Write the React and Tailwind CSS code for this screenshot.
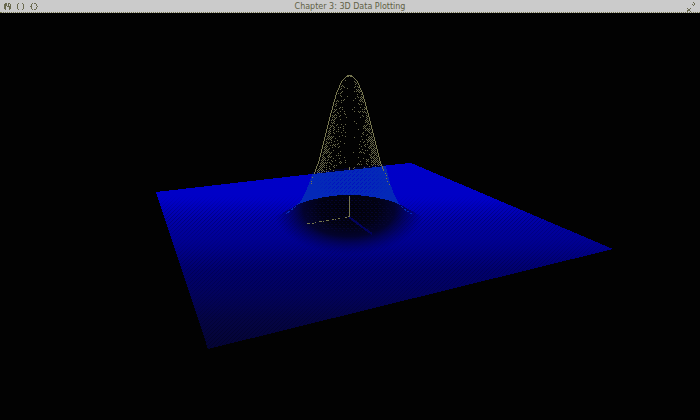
import React from "react";

// Half-width of the bell for each height, from its peak to the plane.
const profile = [
  [76, 1], [77, 4], [80, 7], [86, 10], [93, 13], [100, 15], [111, 18],
  [123, 21], [135, 24], [147, 27], [159, 30], [170, 34], [180, 38],
];

function halfWidth(y) {
  for (let i = 1; i < profile.length; i++) {
    const [y0, w0] = profile[i - 1];
    const [y1, w1] = profile[i];
    if (y <= y1) return w0 + ((w1 - w0) * (y - y0)) / (y1 - y0);
  }
  return 38;
}

function bellPoints() {
  let seed = 7;
  const random = () => {
    seed = (seed * 16807) % 2147483647;
    return seed / 2147483647;
  };
  let d = "";
  for (let y = 77; y < 174; y++) {
    const w = halfWidth(y);
    for (let x = -Math.floor(w) + 2; x < w - 1; x++) {
      if (y > 173 - (x + 37) / 9) continue;
      const edge = Math.abs(x) / w;
      const depth = (y - 76) / 98;
      const chance = 0.03 + 0.75 * Math.pow(edge, 4) + 0.16 * depth * edge;
      const r = random();
      if ((x + y) % 2 === 0 && edge > 0.12 && r < chance * 1.5) {
        d += `M${349 + x} ${y}h1v1h-1z`;
      }
    }
  }
  return d;
}

function bellOutline() {
  let d = "M347 75h5v1h-5z";
  for (let y = 76; y < 174; y++) {
    const w = Math.round(halfWidth(y));
    const next = Math.max(1, Math.round(halfWidth(y + 1)) - w);
    d += `M${349 - w - next + 1} ${y}h${next}v1h${-next}z`;
    if (y < 171) d += `M${349 + w} ${y}h${next}v1h${-next}z`;
  }
  for (const [x, y] of [[312, 177], [311, 181], [311, 183], [385, 173], [386, 175], [386, 178], [387, 181], [389, 184]]) {
    d += `M${x} ${y}h1v1h-1z`;
  }
  return d;
}

const points = bellPoints();
const outline = bellOutline();

const surface = "M156 192L399 164L411 163L613 249L208 349Z";
const skirt =
  "M312 174L386 166C388 178 392 192 399 204Q376 195 349 195Q322 195 299 204C305 194 309 185 312 174Z";
const crater = "M299 204Q322 195 349 195Q376 195 399 204L432 222L420 258H278L266 222Z";

function Plot() {
  return (
    <svg
      viewBox="0 13 700 407"
      className="block w-full"
      shapeRendering="crispEdges"
      role="img"
      aria-label="3D surface plot"
    >
      <defs>
        <linearGradient id="depth" gradientUnits="userSpaceOnUse" x1="0" y1="163" x2="0" y2="349">
          <stop offset="0" stopColor="#0000c8" />
          <stop offset="0.2" stopColor="#0000c6" />
          <stop offset="0.34" stopColor="#0000a0" />
          <stop offset="0.46" stopColor="#00008a" />
          <stop offset="0.58" stopColor="#00006c" />
          <stop offset="0.7" stopColor="#02025c" />
          <stop offset="0.84" stopColor="#040444" />
          <stop offset="1" stopColor="#040434" />
        </linearGradient>
        <radialGradient
          id="shade"
          gradientUnits="userSpaceOnUse"
          cx="0"
          cy="0"
          r="1"
          gradientTransform="translate(349 209) scale(76 46)"
        >
          <stop offset="0" stopColor="#010108" />
          <stop offset="0.38" stopColor="#020212" />
          <stop offset="0.6" stopColor="#030328" stopOpacity="0.95" />
          <stop offset="0.8" stopColor="#030348" stopOpacity="0.55" />
          <stop offset="1" stopColor="#000064" stopOpacity="0" />
        </radialGradient>
        <linearGradient id="grainFade" gradientUnits="userSpaceOnUse" x1="0" y1="195" x2="0" y2="349">
          <stop offset="0" stopColor="#fff" stopOpacity="0" />
          <stop offset="0.15" stopColor="#fff" stopOpacity="0.7" />
          <stop offset="0.3" stopColor="#fff" stopOpacity="0.2" />
          <stop offset="0.45" stopColor="#fff" stopOpacity="0.6" />
          <stop offset="0.7" stopColor="#fff" stopOpacity="0.3" />
          <stop offset="1" stopColor="#fff" />
        </linearGradient>
        <mask id="grainMask" maskUnits="userSpaceOnUse" x="0" y="13" width="700" height="407">
          <rect y="13" width="700" height="407" fill="url(#grainFade)" />
        </mask>
        <pattern id="grain" width="4" height="4" patternUnits="userSpaceOnUse">
          <path d="M0 0h1v1h-1zM2 2h1v1h-1zM1 3h1v1h-1zM3 1h1v1h-1z" fill="#000018" fillOpacity="0.45" />
        </pattern>
        <pattern id="blueGrain" width="4" height="4" patternUnits="userSpaceOnUse">
          <path d="M0 0h1v1h-1zM2 2h1v1h-1zM1 3h1v1h-1z" fill="#0000c4" fillOpacity="0.65" />
        </pattern>
        <pattern id="craterGrain" width="4" height="4" patternUnits="userSpaceOnUse">
          <path d="M0 0h1v1h-1zM2 2h1v1h-1zM3 0h1v1h-1z" fill="#060638" fillOpacity="0.7" />
        </pattern>
        <radialGradient
          id="skirtFade"
          gradientUnits="userSpaceOnUse"
          cx="0"
          cy="0"
          r="1"
          gradientTransform="translate(352 184) scale(38 24)"
        >
          <stop offset="0.4" stopColor="#fff" />
          <stop offset="1" stopColor="#fff" stopOpacity="0" />
        </radialGradient>
        <mask id="skirtMask">
          <path d={skirt} fill="url(#skirtFade)" />
        </mask>
      </defs>

      <path d={surface} fill="url(#depth)" />
      <path d={surface} fill="url(#grain)" mask="url(#grainMask)" />
      <path d={crater} fill="url(#shade)" />
      <ellipse cx="349" cy="215" rx="44" ry="17" fill="url(#craterGrain)" />
      <path d={skirt} fill="#0429b8" />
      <path d={skirt} fill="url(#blueGrain)" mask="url(#skirtMask)" />
      <path d="M299 203L294 208L286 214M398 203L404 209L412 214" fill="none" stroke="#0429b8" strokeDasharray="3 1" />
      <path d="M312 174L386 166V164L312 172Z" fill="#000024" />

      <path d={points} fill="#68684a" />
      <path d={outline} fill="#777750" />

      <path d="M349 217L361 226L372 234" fill="none" stroke="#02025c" strokeWidth="2" />
      <path
        d="M307 223h3v1h-3zM312 223h2v1h-2zM315 222h1v1h-1zM319 221h3v1h-3zM323 221h1v1h-1zM326 220h3v1h-3zM332 219h2v1h-2zM335 219h1v1h-1zM338 218h2v1h-2zM345 217h2v1h-2zM348 216h1v1h-1z"
        fill="#777750"
      />
      <path d="M349 167h1v3h-1zM349 196h1v21h-1z" fill="#777750" />
    </svg>
  );
}

function WindowButton({ label, children }) {
  return (
    <button type="button" aria-label={label} className="block h-2 w-2">
      <svg viewBox="0 0 8 8" className="block h-2 w-2" fill="#6a6a50" shapeRendering="crispEdges">
        {children}
      </svg>
    </button>
  );
}

function TitleBar() {
  return (
    <header className="grid h-[13px] grid-cols-3 items-center border-b border-dotted border-[#777750] bg-[#cbcbcb] px-1">
      <div className="flex gap-[5px]">
        <WindowButton label="Close">
          <path d="M1 0h2v1h-2zM4 0h2v1h-2zM0 1h2v5h-2zM6 1h1v5h-1zM1 6h1v1h-1zM5 6h1v1h-1zM2 1h1v2h-1zM4 1h1v2h-1zM3 3h3v1h-3zM5 4h1v2h-1z" />
        </WindowButton>
        <WindowButton label="Minimize">
          <path d="M1 0h1v1h-1zM0 1h1v5h-1zM1 6h1v1h-1zM5 0h1v1h-1zM6 1h1v5h-1zM5 6h1v1h-1z" />
        </WindowButton>
        <WindowButton label="Zoom">
          <path d="M2 0h1v1h-1zM1 1h1v2h-1zM0 3h2v1h-2zM1 4h1v2h-1zM2 6h1v1h-1zM4 0h2v1h-2zM6 1h1v2h-1zM7 3h1v1h-1zM6 4h1v2h-1zM4 6h2v1h-2z" />
        </WindowButton>
      </div>
      <h1 className="pt-px text-center text-[8px] leading-[12px] whitespace-nowrap text-[#606044]">
        Chapter 3: 3D Data Plotting
      </h1>
      <button type="button" aria-label="Full screen" className="block h-[10px] w-[10px] justify-self-end">
        <svg viewBox="0 0 10 10" className="block h-[10px] w-[10px]" fill="#6a6a50" shapeRendering="crispEdges">
          <path d="M7 0h1v1h-1zM8 1h1v2h-1zM6 2h1v1h-1zM7 3h1v1h-1zM1 6h1v1h-1zM4 6h1v1h-1zM2 7h2v1h-2zM1 8h3v1h-3zM1 9h1v1h-1zM4 9h1v1h-1z" />
        </svg>
      </button>
    </header>
  );
}

export default function App() {
  return (
    <main className="min-h-screen bg-[#020202] font-['DejaVu_Sans',sans-serif]">
      <TitleBar />
      <Plot />
    </main>
  );
}
